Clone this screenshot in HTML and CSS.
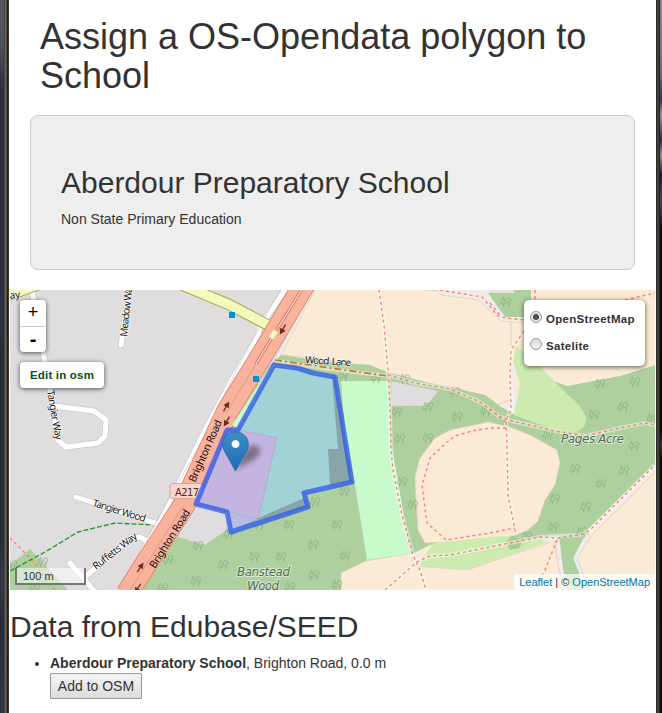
FILE: index.html
```html
<!DOCTYPE html>
<html lang="en">
<head>
<meta charset="utf-8">
<title>Assign a OS-Opendata polygon to School</title>
<link rel="stylesheet" href="styles.css">
</head>
<body>
<div class="window">
<div class="edge edge-left"></div>
<main class="page">
  <h1>Assign a OS-Opendata polygon to School</h1>
  <section class="jumbotron">
    <h2>Aberdour Preparatory School</h2>
    <p>Non State Primary Education</p>
  </section>
  <section class="map">
    <svg class="tiles" viewBox="10 290 645 300" width="645" height="300">
      <defs>
        <g id="tree" fill="none" stroke="#8db383" stroke-width=".8">
          <path d="M-2.500-5L-5 2H-.3ZM-2.500 2V5"/><circle cx="2.500" cy="-2" r="2.300"/><path d="M2.500 0V5M2.500 3L4.500 1"/>
        </g>
        <linearGradient id="pin" x1="0" y1="0" x2="0" y2="1"><stop offset="0" stop-color="#3b91cb"/><stop offset="1" stop-color="#2068af"/></linearGradient>
        <filter id="soft" x="-50%" y="-50%" width="200%" height="200%"><feGaussianBlur stdDeviation="2.800"/></filter>
      </defs>
      <rect x="10" y="290" width="645" height="300" fill="#e0dddf"/>
      <!-- land use -->
      <path fill="#f1ece8" d="M312 290H330V365L272 366Z"/>
      <path fill="#fbebd6" stroke="#e3cfba" stroke-width=".8" d="M316 288H657V592H330L388 372L330 360L281 355Z"/>
      <path fill="#add09e" d="M281 355L330 362L370 365L387 372L430 383L455 388L485 395L500 406L515 412L545 420V378L567 386L620 376L656 365V464L588 535L577 558L586 592H562L556 540L430 545L412 554L366 561L341 573V592H128L178 537L232 425L270 365Z"/>
      <path fill="#add09e" d="M10 565L30 549L70 592H10Z"/>
      <path fill="#e0dddf" stroke="#d2c6be" stroke-width=".6" d="M196 504L228 512L231 527L205 545L177 537Z"/>
      <path fill="#fbebd6" stroke="#e3cfba" stroke-width=".8" d="M488 422L510 427L530 435L557 450L560 463L555 485L545 500L538 521L528 530L513 536L490 540L425 543L418 530L416 500L415 477L420 458L435 438L450 430Z"/>
      <path fill="#cdebb0" d="M412 566L424 556L434 543L500 536L557 539L490 562L468 570Z"/>
      <path fill="#fbebd6" stroke="#e3cfba" stroke-width=".8" d="M341 573L366 561L411 553L414 566L468 570L490 562L555 541L559 570L566 592H341Z"/>
      <path fill="#99bf8e" opacity=".75" d="M506 541L512 536L524 539L519 548L510 550Z"/>
      <path fill="#c8facc" d="M341 381H389L391 445L398 480L404 520L411 553L367 560L355 485L345 435Z"/>
      <path fill="#e0dddf" stroke="#cec4bd" stroke-width=".6" d="M391 381L439 391L431 400L425 406L391 406Z"/>
      <path fill="#fbebd6" d="M513 418L496 404L508 400Z"/>
      <path fill="#f1ece8" d="M516 345L512 370V402L497 405L511 416L520 420L514 380Z"/>
      <path fill="#add09e" d="M486 396L500 406L515 415L545 424V430L500 419L484 404Z"/>
      <path fill="#cdebb0" d="M516 345L545 372L568 395Q582 405 586 418Q587 428 575 432L555 430L514 415L520 383L513 362Z"/>
      <path fill="#f1ece8" stroke="#d9c9b7" stroke-width=".6" d="M434 288L441 295L478 300L501 321L524 323V316L506 316L490 292H513V288Z"/>
      <path fill="#add09e" d="M488 293L514 293V288H531V317L505 317ZM422 290H435L441 291Z"/>
      <path fill="none" stroke="#e3cfba" d="M511 322V346M509 400L497 405"/>
      <path fill="none" stroke="#f1ece8" stroke-width="5" d="M655 467L620 502L588 533M543 539L557 539L560 565L565 592M588 535L576 558L588 590"/>
      <path fill="none" stroke="#d9c9b7" stroke-width=".7" d="M655 472L591 536L577 558L589 590M555 541L558 565L564 590M416 562L426 590"/>
      <circle cx="417" cy="562" r="4" fill="#f1ece8"/>
      <g id="woods">
        <use href="#tree" x="343" y="376"/><use href="#tree" x="376" y="378"/><use href="#tree" x="405" y="379"/><use href="#tree" x="455" y="392"/><use href="#tree" x="397" y="412"/><use href="#tree" x="428" y="407"/><use href="#tree" x="457" y="417"/><use href="#tree" x="486" y="411"/><use href="#tree" x="400" y="439"/><use href="#tree" x="428" y="438"/><use href="#tree" x="402" y="482"/><use href="#tree" x="413" y="505"/>
        <use href="#tree" x="506" y="302"/><use href="#tree" x="600" y="384"/><use href="#tree" x="635" y="382"/><use href="#tree" x="623" y="407"/><use href="#tree" x="594" y="415"/><use href="#tree" x="652" y="419"/><use href="#tree" x="548" y="435"/><use href="#tree" x="634" y="446"/><use href="#tree" x="575" y="469"/><use href="#tree" x="624" y="471"/><use href="#tree" x="601" y="484"/><use href="#tree" x="555" y="499"/><use href="#tree" x="586" y="507"/><use href="#tree" x="553" y="527"/><use href="#tree" x="582" y="532"/><use href="#tree" x="527" y="537"/>
        <use href="#tree" x="315" y="502"/><use href="#tree" x="344" y="492"/><use href="#tree" x="337" y="525"/><use href="#tree" x="289" y="525"/><use href="#tree" x="259" y="525"/><use href="#tree" x="229" y="534"/><use href="#tree" x="198" y="546"/><use href="#tree" x="313" y="545"/><use href="#tree" x="345" y="556"/><use href="#tree" x="254" y="557"/><use href="#tree" x="281" y="557"/><use href="#tree" x="223" y="565"/><use href="#tree" x="168" y="560"/><use href="#tree" x="196" y="581"/><use href="#tree" x="314" y="575"/><use href="#tree" x="337" y="585"/><use href="#tree" x="290" y="587"/><use href="#tree" x="163" y="588"/><use href="#tree" x="12" y="565"/><use href="#tree" x="43" y="562"/><use href="#tree" x="35" y="588"/>
      </g>
      <!-- footpaths -->
      <g fill="none" stroke="#fff" stroke-opacity=".45" stroke-width="4">
        <path d="M379 290L384 325L388 370L390 410L391 450L393 470L402 515L413 555L420 570L426 590"/>
        <path d="M388 375L415 383L450 389L480 402L500 417L512 421L555 431L585 436L620 428L645 423L655 425"/>
        <path d="M524 331L511 350L510 375L511 410L506 420L507 445L508 495L516 535"/>
        <path d="M385 590L417 562L430 556L450 555L500 545L540 537L580 535L590 530L655 465"/>
      </g>
      <g fill="none" stroke="#fa8173" stroke-width="1.400" stroke-dasharray="3 3">
        <path d="M379 290L384 325L388 370L390 410L391 450L393 470L402 515L413 555L420 570L426 590"/>
        <path d="M388 375L415 383L450 389L480 402L500 417L512 421L555 431L585 436L620 428L645 423L655 425"/>
        <path d="M440 290L482 297L498 316L506 318L524 320M535 290V300M625 300L655 293M490 303L500 315"/>
        <path d="M524 331L511 350L510 375L511 410L506 420L507 445L508 495L516 535M490 409L506 422"/>
        <path d="M506 428H490L472 431L455 436L446 443L430 458L422 485L427 523L446 540L490 533L515 528"/>
        <path d="M385 590L417 562L430 556L450 555L500 545L540 537L558 538L583 534L590 530L655 465M557 540L545 570L535 590M10 538L30 558L55 590"/>
      </g>
      <path fill="none" stroke="#e4dcc8" stroke-width="4" d="M275 361L330 369L388 376"/>
      <path fill="none" stroke="#ac8327" stroke-width="1.600" stroke-dasharray="7 3 2 3" d="M275 360L330 368L388 376"/>
      <path fill="none" stroke="#27962a" stroke-width="1.400" stroke-dasharray="5 2" d="M10 571L45 552L78 532L115 523L155 525"/>
      <!-- side streets -->
      <g fill="none" stroke-linejoin="round" stroke-linecap="round">
        <path stroke="#cbc8ca" stroke-width="6.300" d="M32 290L38 330L45 362L52 402L58 440L66 447L98 443L105 436L106 420L94 411L54 406M129 290L121 345M76 497L158 524M150 543L140 537L130 539L85 577M70 563L95 592M142 558V552L158 526L204 432L232 380L258 335L260 327L287 287"/>
        <path stroke="#fff" stroke-width="5" d="M32 290L38 330L45 362L52 402L58 440L66 447L98 443L105 436L106 420L94 411L54 406M129 290L121 345M76 497L158 524M150 543L140 537L130 539L85 577M70 563L95 592M142 558V552L158 526L204 432L232 380L258 335L260 327L287 287"/>
        <path d="M149 534L202 441M221 402L238 367L280 290" stroke="#cbc5c2" stroke-width=".7"/>
      </g>
      <!-- secondary and trunk roads -->
      <path fill="none" stroke="#9da64f" stroke-width="11.500" d="M160 276L228 304L268 325"/>
      <path fill="none" stroke="#f5f9b9" stroke-width="9.500" d="M160 276L228 304L270 326"/>
      <path fill="#f5f9b9" stroke="#9da64f" d="M8 286H50L8 301Z"/>
      <g fill="none" stroke-linejoin="round">
        <path stroke="#dc7963" stroke-width="22.500" d="M307 280L262 355L227 412L214 440L184 505L147 562L127 594"/>
        <path stroke="#f9b29c" stroke-width="21" d="M307 280L262 355L227 412L214 440L184 505L147 562L127 594"/>
        <path stroke="#d16d58" stroke-width="3" d="M304 286L273 336L256 364"/>
        <path stroke="#f6d6cb" stroke-width="1.400" d="M304 286L273 336L256 364"/>
        <path stroke="#dd8a76" stroke-width=".7" d="M256 364L226 413M184 505L130 590"/>
        <path stroke="#f5f9b9" stroke-width="5" d="M271 338L276 331"/>
      </g>
      <path fill="#c8facc" d="M271 366L232 425L238 428L275 366Z"/>
      <g fill="#6b2b22" stroke="#6b2b22" stroke-width="1.300">
        <g transform="translate(283 329) rotate(120)"><path d="M-5 0H3M1-2L5 0L1 2Z"/></g>
        <g transform="translate(226 407) rotate(-60)"><path d="M-5 0H3M1-2L5 0L1 2Z"/></g>
        <g transform="translate(227 421) rotate(120)"><path d="M-5 0H3M1-2L5 0L1 2Z"/></g>
        <g transform="translate(140 568) rotate(-57)"><path d="M-5 0H3M1-2L5 0L1 2Z"/></g>
        <g transform="translate(138 588) rotate(123)"><path d="M-5 0H3M1-2L5 0L1 2Z"/></g>
      </g>
      <path fill="#0092da" d="M229 312H235V318H229ZM253 376H259V382H253Z"/>
      <rect x="170" y="483.500" width="33" height="15" rx="2" fill="#f7d4cc" stroke="#d9a79e"/>
      <!-- selected polygon -->
      <path fill="#a0d2d6" d="M274 365L297 368L313 373L335 377L352 482L304 493L308 507L231 532L227 512L196 504L227 430H238Z"/>
      <path fill="#88a6a9" d="M332 377H335L352 482L330 485L328 449H338ZM231 530L304 498L308 507Z"/>
      <path fill="#b7bce4" d="M228 513L258 519L231 530Z"/>
      <path fill="#c3b5df" stroke="#b4a0ce" stroke-width=".7" d="M227 430H238L277 438L258 519L196 504Z"/>
      <use href="#tree" x="335" y="463" opacity=".6"/>
      <path fill="none" stroke="#2d55ec" stroke-opacity=".75" stroke-width="5" stroke-linejoin="round" d="M274 365L297 368L313 373L335 377L352 482L304 493L308 507L231 532L227 512L196 504L227 430H238Z"/>
      <!-- labels -->
      <g class="street">
        <text transform="translate(10 299) rotate(-7)">ay</text>
        <text transform="translate(127 337) rotate(-84)" textLength="54">Meadow Way</text>
        <text transform="translate(47 391) rotate(80)" textLength="50">Tangier Way</text>
        <text transform="translate(92 506) rotate(17)" textLength="55">Tangier Wood</text>
        <text transform="translate(96 570) rotate(-38)" textLength="53">Ruffetts Way</text>
        <text class="main-road" transform="translate(195 483) rotate(-66)" textLength="67">Brighton Road</text>
        <text class="main-road" transform="translate(155 569) rotate(-58)" textLength="67">Brighton Road</text>
        <text transform="translate(305 363) rotate(4)" textLength="46" word-spacing="2">Wood Lane</text>
      </g>
      <text class="ref" x="175" y="496" textLength="24">A217</text>
      <g class="place"><text x="237" y="576" textLength="53">Banstead</text><text x="247" y="590" textLength="32">Wood</text><text x="561" y="443" textLength="63">Pages Acre</text></g>
      <!-- marker -->
      <path d="M236 470L243 453Q251 441 259 447Q263 455 250 462Z" fill="#222" opacity=".45" filter="url(#soft)"/>
      <path d="M235.500 471L225 452C219 441 226 432 235.500 432S252 441 246 452Z" fill="url(#pin)" stroke="#2b72ac"/>
      <circle cx="235.500" cy="444" r="4.300" fill="#fff" stroke="#2d78b2" stroke-width=".7"/>
    </svg>
    <div class="zoom control"><a>+</a><a>-</a></div>
    <div class="edit control">Edit in osm</div>
    <div class="layers control">
      <label><i class="radio checked"></i>OpenStreetMap</label>
      <label><i class="radio"></i>Satelite</label>
    </div>
    <div class="scale">100 m</div>
    <div class="attribution"><a>Leaflet</a> | © <a>OpenStreetMap</a></div>
  </section>
  <h2 class="data-title">Data from Edubase/SEED</h2>
  <ul>
    <li><b>Aberdour Preparatory School</b>, Brighton Road, 0.0 m<button>Add to OSM</button></li>
  </ul>
</main>
<div class="edge edge-right"></div>
</div>
</body>
</html>
```
FILE: styles.css
```css
* { box-sizing: border-box; }
body { margin: 0; font: 14px/20px "Liberation Sans", Arial, sans-serif; color: #333; background: #fff; overflow: hidden; }
.window { display: grid; grid-template-columns: 9px 1fr 6px; height: 713px; }
.edge-left { background: linear-gradient(90deg, transparent 4px, #48443e 4px 5px, #69655e 5px 6px, #48443e 6px 7px, #24221e 7px 8px, #383631 8px), linear-gradient(#535861, #4b5160 45px, #2b2d42 90px, #2b2f43 330px, #242b38 370px, #232b3b 540px, #353a4b 580px, #252b3c 620px, #303647); }
.edge-right { background: linear-gradient(90deg, #2a2926 1px, #41403b 1px 3px, #25241f 3px 4px, transparent 4px), linear-gradient(#8a8692, #716e80 70px, #34375a 100px, #9895a0 115px, #272a4b 140px, #918e99 155px, #171833 175px, #49455a 200px, #0d0d15 230px, #090a0c 430px, #303033 445px, #0c0d10 460px, #101114); }
.page { padding: 17px 1px 0; min-width: 0; }
h1, h2 { font-weight: normal; line-height: 1.1; margin: 0; }
h1 { font-size: 36px; line-height: 39px; padding: 0 30px; }
h2 { font-size: 30px; }
.jumbotron { margin: 20px 20px 20px; height: 155px; padding: 50px 30px 0; background: #eee; border: 1px solid #ccc; border-radius: 8px; }
.jumbotron p { margin: 10px 0 0; }
.map { position: relative; height: 300px; width: 645px; overflow: hidden; }
.tiles { display: block; }
.street text { font: 10px "Noto Sans", sans-serif; fill: #111; stroke: #fff; stroke-opacity: .7; stroke-width: 1.5px; paint-order: stroke; }
.street .main-road { font-size: 10.5px; stroke: #f9b29c; }
.ref { font: 10px "DejaVu Sans", sans-serif; fill: #5d2b25; }
.place text { font: italic 12px "DejaVu Sans", sans-serif; fill: #526f50; stroke: #fff; stroke-opacity: .5; stroke-width: 2px; paint-order: stroke; }
.control { position: absolute; background: #fff; border-radius: 4px; box-shadow: 0 1px 5px rgba(0, 0, 0, .65); }
.zoom { left: 10px; top: 10px; width: 26px; height: 52px; text-align: center; color: #000; }
.zoom a { display: block; height: 26px; font: 18px/24px "Liberation Sans", sans-serif; }
.zoom a + a { border-top: 1px solid #ccc; font-size: 20px; font-weight: bold; line-height: 25px; }
.edit { left: 10px; top: 72px; width: 84px; height: 26px; font: bold 11.5px/26px "Liberation Sans", sans-serif; letter-spacing: .2px; text-align: center; color: #0b4d12; }
.layers { left: 514px; top: 10px; width: 121px; height: 66px; padding: 5px 6px; border-radius: 5px; }
.layers label { display: flex; height: 27px; font: bold 11.5px/29px "Liberation Sans", sans-serif; letter-spacing: .3px; }
.radio { width: 12px; height: 12px; margin: 6px 4px 0 0; border: 1px solid #999; border-radius: 50%; background: linear-gradient(#ddd, #eee); }
.checked { background: radial-gradient(circle, #505050 2.7px, #e3e3e3 3.4px); }
.scale { position: absolute; left: 5px; bottom: 5px; width: 71px; height: 17px; padding-left: 6px; border: 2px solid #777; border-top: 0; background: rgba(255, 255, 255, .5); font-size: 11px; line-height: 16px; }
.attribution { position: absolute; right: 0; bottom: 0; width: 141px; height: 16px; padding-right: 5px; background: rgba(255, 255, 255, .7); font-size: 11px; line-height: 16px; text-align: right; white-space: nowrap; }
.attribution a { color: #0078a8; }
.data-title { margin: 20px 0 10px; }
ul { margin: 0; padding-left: 40px; }
button { display: block; width: 92px; height: 26px; padding: 0; border: 1px solid #999; border-radius: 1px; background: linear-gradient(#f4f4f4, #dcdcdc); color: #333; font: 14px/22px "Liberation Sans", sans-serif; }
```
